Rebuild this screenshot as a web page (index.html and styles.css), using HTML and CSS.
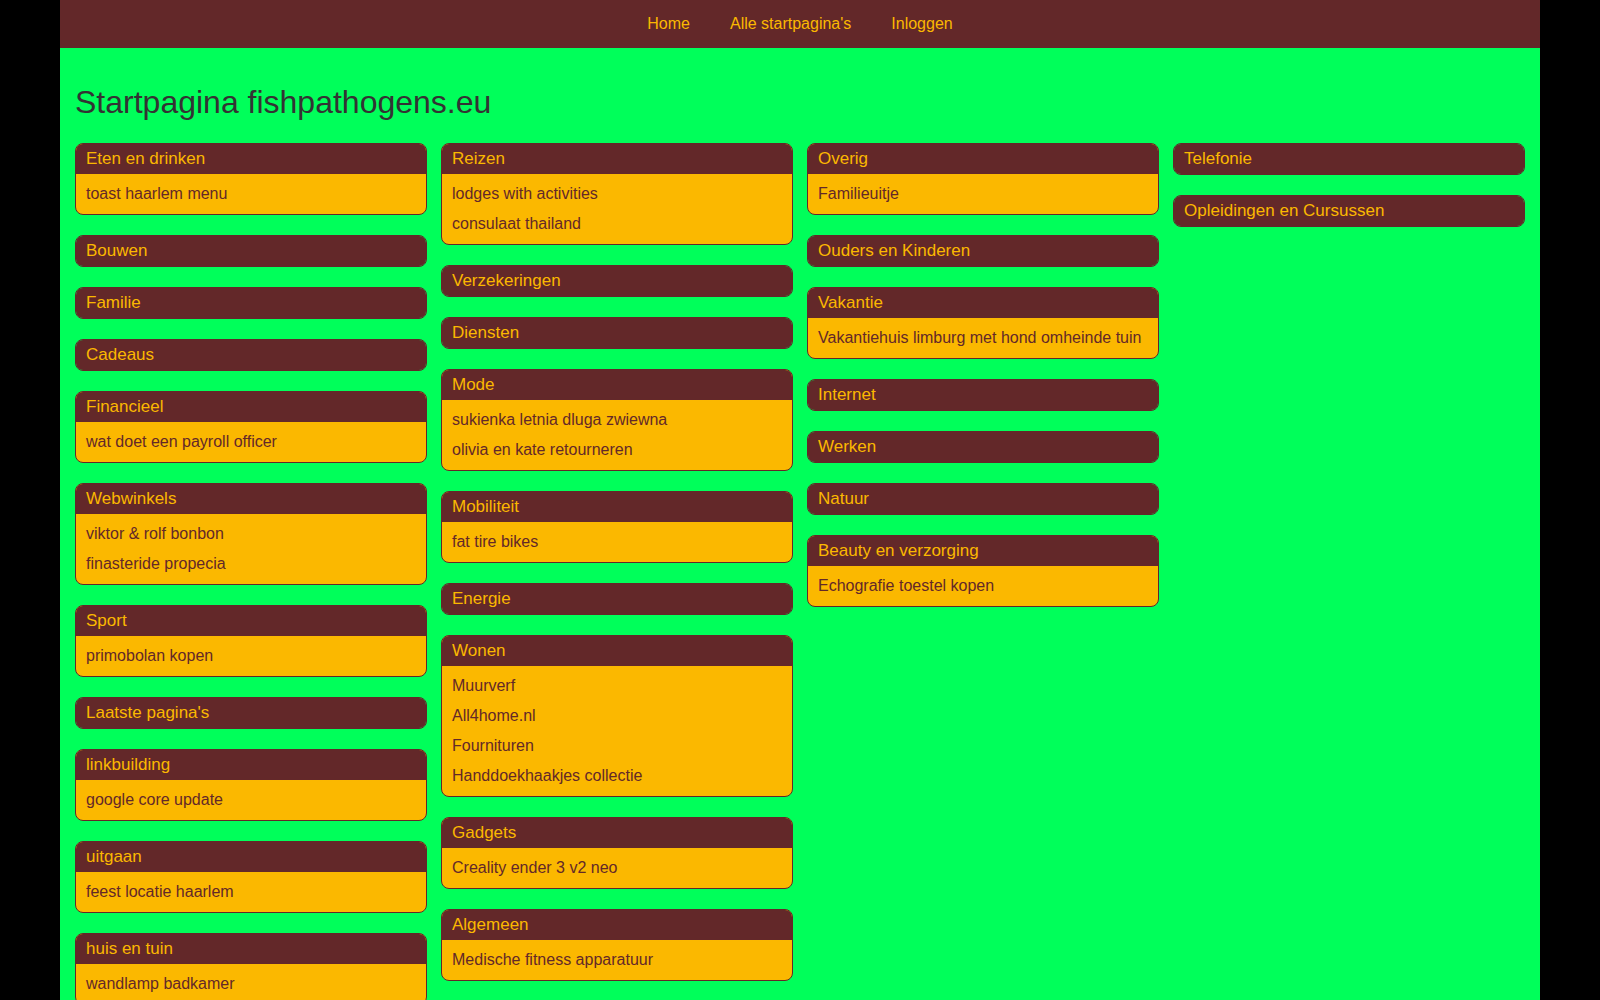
FILE: index.html
```html
<!DOCTYPE html>
<html lang="nl">
<head>
    <meta charset="UTF-8">
    <title>Startpagina fishpathogens.eu</title>
    <link rel="stylesheet" href="styles.css">
</head>
<body>

<div class="wrapper">
    <nav class="topnav">
        <a href="#">Home</a>
        <a href="#">Alle startpagina's</a>
        <a href="#">Inloggen</a>
    </nav>

    <main class="content">
        <h1>Startpagina fishpathogens.eu</h1>

        <div class="columns">
            <div class="column">
                <div class="card">
                    <div class="card-title">Eten en drinken</div>
                    <ul class="card-links">
                        <li><a href="#">toast haarlem menu</a></li>
                    </ul>
                </div>
                <div class="card"><div class="card-title">Bouwen</div></div>
                <div class="card"><div class="card-title">Familie</div></div>
                <div class="card"><div class="card-title">Cadeaus</div></div>
                <div class="card">
                    <div class="card-title">Financieel</div>
                    <ul class="card-links">
                        <li><a href="#">wat doet een payroll officer</a></li>
                    </ul>
                </div>
                <div class="card">
                    <div class="card-title">Webwinkels</div>
                    <ul class="card-links">
                        <li><a href="#">viktor &amp; rolf bonbon</a></li>
                        <li><a href="#">finasteride propecia</a></li>
                    </ul>
                </div>
                <div class="card">
                    <div class="card-title">Sport</div>
                    <ul class="card-links">
                        <li><a href="#">primobolan kopen</a></li>
                    </ul>
                </div>
                <div class="card"><div class="card-title">Laatste pagina's</div></div>
                <div class="card">
                    <div class="card-title">linkbuilding</div>
                    <ul class="card-links">
                        <li><a href="#">google core update</a></li>
                    </ul>
                </div>
                <div class="card">
                    <div class="card-title">uitgaan</div>
                    <ul class="card-links">
                        <li><a href="#">feest locatie haarlem</a></li>
                    </ul>
                </div>
                <div class="card">
                    <div class="card-title">huis en tuin</div>
                    <ul class="card-links">
                        <li><a href="#">wandlamp badkamer</a></li>
                    </ul>
                </div>
            </div>

            <div class="column">
                <div class="card">
                    <div class="card-title">Reizen</div>
                    <ul class="card-links">
                        <li><a href="#">lodges with activities</a></li>
                        <li><a href="#">consulaat thailand</a></li>
                    </ul>
                </div>
                <div class="card"><div class="card-title">Verzekeringen</div></div>
                <div class="card"><div class="card-title">Diensten</div></div>
                <div class="card">
                    <div class="card-title">Mode</div>
                    <ul class="card-links">
                        <li><a href="#">sukienka letnia dluga zwiewna</a></li>
                        <li><a href="#">olivia en kate retourneren</a></li>
                    </ul>
                </div>
                <div class="card">
                    <div class="card-title">Mobiliteit</div>
                    <ul class="card-links">
                        <li><a href="#">fat tire bikes</a></li>
                    </ul>
                </div>
                <div class="card"><div class="card-title">Energie</div></div>
                <div class="card">
                    <div class="card-title">Wonen</div>
                    <ul class="card-links">
                        <li><a href="#">Muurverf</a></li>
                        <li><a href="#">All4home.nl</a></li>
                        <li><a href="#">Fournituren</a></li>
                        <li><a href="#">Handdoekhaakjes collectie</a></li>
                    </ul>
                </div>
                <div class="card">
                    <div class="card-title">Gadgets</div>
                    <ul class="card-links">
                        <li><a href="#">Creality ender 3 v2 neo</a></li>
                    </ul>
                </div>
                <div class="card">
                    <div class="card-title">Algemeen</div>
                    <ul class="card-links">
                        <li><a href="#">Medische fitness apparatuur</a></li>
                    </ul>
                </div>
            </div>

            <div class="column">
                <div class="card">
                    <div class="card-title">Overig</div>
                    <ul class="card-links">
                        <li><a href="#">Familieuitje</a></li>
                    </ul>
                </div>
                <div class="card"><div class="card-title">Ouders en Kinderen</div></div>
                <div class="card">
                    <div class="card-title">Vakantie</div>
                    <ul class="card-links">
                        <li><a href="#">Vakantiehuis limburg met hond omheinde tuin</a></li>
                    </ul>
                </div>
                <div class="card"><div class="card-title">Internet</div></div>
                <div class="card"><div class="card-title">Werken</div></div>
                <div class="card"><div class="card-title">Natuur</div></div>
                <div class="card">
                    <div class="card-title">Beauty en verzorging</div>
                    <ul class="card-links">
                        <li><a href="#">Echografie toestel kopen</a></li>
                    </ul>
                </div>
            </div>

            <div class="column">
                <div class="card"><div class="card-title">Telefonie</div></div>
                <div class="card"><div class="card-title">Opleidingen en Cursussen</div></div>
            </div>
        </div>
    </main>
</div>

</body>
</html>
```

FILE: styles.css
```css
body {
    margin: 0;
    background-color: #000;
    font-family: "Liberation Sans", Arial, sans-serif;
    font-size: 16px;
}
.wrapper {
    width: 1480px;
    margin: 0 auto;
    background-color: #00ff5a;
    min-height: 1000px;
}
.topnav {
    background-color: #632829;
    height: 48px;
    display: flex;
    justify-content: center;
    align-items: center;
    padding-bottom: 1px;
    box-sizing: border-box;
}
.topnav a {
    color: #fbb800;
    text-decoration: none;
    padding: 0 20px;
    line-height: 46px;
}
.content {
    padding: 15px;
}
h1 {
    font-size: 32px;
    font-weight: normal;
    color: #333;
    margin: 21px 0 22px;
    line-height: 37px;
}
.columns {
    display: grid;
    grid-template-columns: repeat(4, 1fr);
    gap: 14px;
    align-items: start;
}
.card {
    border: 1px solid #632829;
    border-radius: 8px;
    overflow: hidden;
    margin-bottom: 20px;
    background-color: #fbb800;
}
.card-title {
    background-color: #632829;
    color: #fbb800;
    font-size: 17px;
    line-height: 20px;
    padding: 5px 10px 5px;
}
.card-links {
    list-style: none;
    margin: 0;
    padding: 5px 10px;
}
.card-links li {
    line-height: 30px;
}
.card-links a {
    color: #632829;
    text-decoration: none;
}
```
